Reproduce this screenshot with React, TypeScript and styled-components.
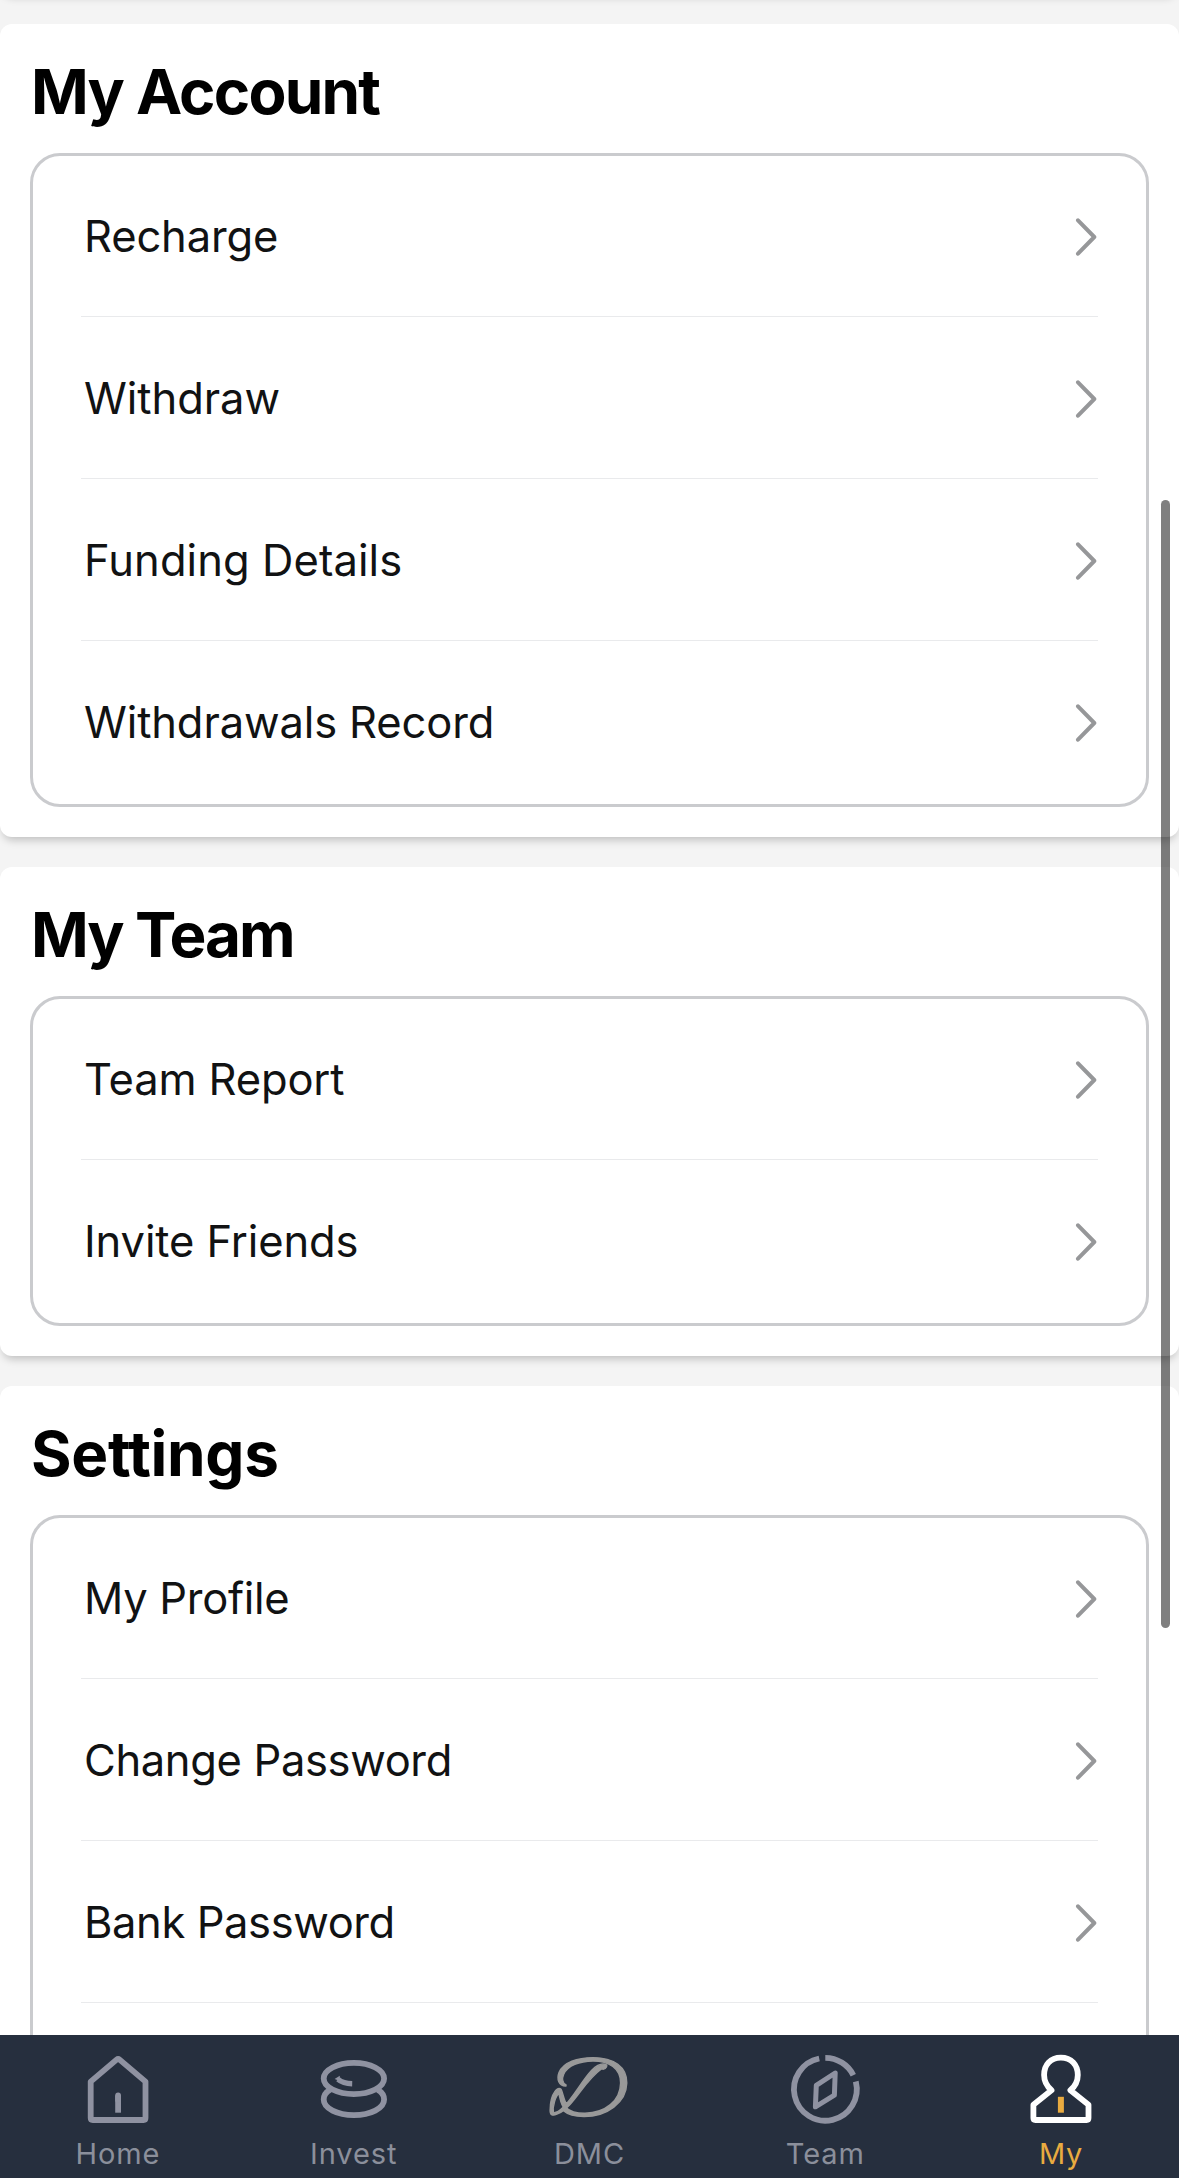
import React from 'react';
import styled, { createGlobalStyle } from 'styled-components';

const GlobalStyle = createGlobalStyle`
  *, *::before, *::after { box-sizing: border-box; }
  html, body { margin: 0; padding: 0; }
  body {
    background: #f4f4f4;
    font-family: Inter, Roboto, "Liberation Sans", sans-serif;
    overflow: hidden;
  }
`;

const Screen = styled.div`
  position: relative;
  display: flex;
  flex-direction: column;
  width: 1179px;
  height: 2178px;
  overflow: hidden;
  background: #f4f4f4;
`;

const Scroller = styled.main`
  flex: 1;
  min-height: 0;
  overflow: hidden;
  display: flex;
  flex-direction: column;
  gap: 30px;
`;

const Card = styled.section`
  flex: none;
  padding: 0 30px 30px;
  border-radius: 12px;
  background: #fff;
  box-shadow: 0 6px 9px -3px rgba(0, 0, 0, 0.22);
`;

const PreviousCard = styled(Card)`
  height: 60px;
  margin-top: -66px;
  padding: 0;
`;

const Title = styled.h2<{ $spacing: number }>`
  margin: 0;
  height: 129px;
  padding: 30px 0 0 1px;
  font-size: 62px;
  line-height: 75px;
  font-weight: 700;
  letter-spacing: ${(p) => p.$spacing}px;
  color: #000;
`;

const List = styled.ul`
  margin: 0;
  padding: 0 48px;
  list-style: none;
  border: 3px solid #cacbce;
  border-radius: 30px;
`;

const Row = styled.li`
  display: flex;
  align-items: center;
  justify-content: space-between;
  height: 161px;
  margin-bottom: 1px;
  padding: 0 1px 0 3px;
  border-bottom: 1px solid #e9eaec;
  &:last-child { border-bottom-color: transparent; }
`;

const Label = styled.span<{ $spacing: number }>`
  padding-bottom: 1px;
  font-size: 43.5px;
  line-height: 60px;
  letter-spacing: ${(p) => p.$spacing}px;
  white-space: nowrap;
  color: #111213;
`;

const TabBar = styled.nav`
  flex: none;
  display: grid;
  grid-template-columns: repeat(5, 1fr);
  height: 143px;
  background: #262f3e;
`;

const Tab = styled.div<{ $active?: boolean }>`
  display: flex;
  flex-direction: column;
  align-items: center;
  padding-top: 15px;
  color: ${(p) => (p.$active ? '#e9ab40' : '#8b8f9b')};
`;

const TabLabel = styled.span`
  margin-top: 9px;
  font-size: 29px;
  line-height: 38px;
  letter-spacing: 0.9px;
`;

const Icon = styled.svg`
  display: block;
  flex: none;
  fill: none;
  stroke: #8f92a1;
  stroke-width: 5.8;
  stroke-linejoin: round;
`;

const ChevronIcon = styled(Icon)`
  margin-top: 2px;
  stroke: #969799;
  stroke-width: 4;
  stroke-linecap: round;
`;

const ScrollThumb = styled.div`
  position: absolute;
  top: 500px;
  right: 9px;
  width: 9px;
  height: 1128px;
  border-radius: 5px;
  background: rgba(0, 0, 0, 0.5);
`;

const Chevron = () => (
  <ChevronIcon width="24" height="42" viewBox="0 0 24 42">
    <path d="M5 4.3 21.3 21 5 37.7" />
  </ChevronIcon>
);

const TabIcon = ({ children }: { children: React.ReactNode }) => (
  <Icon width="80" height="76" viewBox="0 0 80 76">{children}</Icon>
);

const HomeIcon = () => (
  <TabIcon>
    <path d="M12.7 31.6 38.6 9.6Q40.1 8.3 41.6 9.6L67.5 31.6V68Q67.5 70 65.5 70H14.7Q12.7 70 12.7 68Z" />
    <path d="M40.1 45.5V62.7" />
    <path d="M40.1 45.5V50" strokeLinecap="round" />
  </TabIcon>
);

const InvestIcon = () => (
  <TabIcon>
    <ellipse cx="39.9" cy="28.5" rx="30.2" ry="15.6" />
    <path d="M16.2 39.8C11.6 42.3 9.7 45.6 9.7 49.6C9.7 58.4 23.2 65.2 39.9 65.2S70.1 58.4 70.1 49.6C70.1 45.6 68.2 42.3 63.6 39.8" />
    <path d="M24 29.2Q29 33.6 38.2 33.8" strokeWidth="5.4" />
    <path d="M20.6 29 25.8 25.8V31Z" fill="#8f92a1" stroke="none" />
  </TabIcon>
);

const DmcIcon = () => (
  <TabIcon>
    <g fill="#999" stroke="#999" strokeWidth="1.4">
      <path d="M17 36C9.5 36.2 7.6 29 10 22.5C14.5 12.3 28.5 7.6 44 7.6C65 7.6 78 17 77.8 33C77.4 52.6 58 66.6 35 66.6C26 66.6 19.5 65.3 14.5 60.8L16.5 57.2C21.5 61.8 28.5 63.4 36 63.3C56.5 62.6 71.3 51 71.6 33C71.7 18.2 60 11 44 11C30.5 11.2 18.8 15.6 14.7 24.2C12.8 28.7 13.5 33 17 34.8Z" />
      <path d="M57.8 15.2C53.7 12.5 47.5 15.6 42.7 20.2C32.5 31 24.5 47.5 13.6 57.8C9.9 61.5 7 63 4.4 62.6C3.3 56 6.8 46 9.7 43.8C11.2 47.3 11.2 53.5 15.5 59L18.7 55.7C14.6 51.2 14.4 43.5 12 39.2C10.3 37.5 8 38.5 6.1 41.2C1.8 47 1.1 54 1.1 60.5C1.1 65.6 3.9 66 7.9 64.2C14 62 20 56.3 25 49.8C34 38.6 41.3 27 52.7 18.8C55 20 58.2 18 57.8 15.2Z" />
    </g>
  </TabIcon>
);

const TeamIcon = () => (
  <TabIcon>
    <path d="M40.3 7.9A31.4 31.4 0 0 1 68.3 25.2M70.8 31.5A31.4 31.4 0 1 1 34.2 8.5" />
    <path d="M50.2 23 31.3 35.4 30.4 56.8 49.4 45.2Z" strokeWidth="5" />
  </TabIcon>
);

const MyIcon = () => (
  <TabIcon>
    <path
      d="M30.5 40.3C25.8 36.2 23.1 30.5 23.1 25C23.1 14.6 29.5 7.7 39.9 7.7S56.8 14.6 56.8 25C56.8 30.5 54.2 36.2 49.4 40.3L67.5 54.7V68Q67.5 70 65.5 70H14.4Q12.4 70 12.4 68V54.7Z"
      stroke="#fff"
    />
    <path d="M39.9 46.8V62.7" stroke="#e9ab40" strokeWidth="6" />
  </TabIcon>
);

type Item = { label: string; spacing: number };

const sections: { title: string; spacing: number; items: Item[] }[] = [
  {
    title: 'My Account',
    spacing: -1.8,
    items: [
      { label: 'Recharge', spacing: -0.15 },
      { label: 'Withdraw', spacing: -0.05 },
      { label: 'Funding Details', spacing: 0.08 },
      { label: 'Withdrawals Record', spacing: -0.12 },
    ],
  },
  {
    title: 'My Team',
    spacing: -2.1,
    items: [
      { label: 'Team Report', spacing: -0.15 },
      { label: 'Invite Friends', spacing: -0.1 },
    ],
  },
  {
    title: 'Settings',
    spacing: -0.3,
    items: [
      { label: 'My Profile', spacing: -0.3 },
      { label: 'Change Password', spacing: -0.35 },
      { label: 'Bank Password', spacing: -0.4 },
      { label: '', spacing: 0 },
    ],
  },
];

const tabs = [
  { label: 'Home', icon: <HomeIcon /> },
  { label: 'Invest', icon: <InvestIcon /> },
  { label: 'DMC', icon: <DmcIcon /> },
  { label: 'Team', icon: <TeamIcon /> },
  { label: 'My', icon: <MyIcon />, active: true },
];

export default function App() {
  return (
    <>
      <GlobalStyle />
      <Screen>
        <Scroller>
          <PreviousCard />
          {sections.map((section) => (
            <Card key={section.title}>
              <Title $spacing={section.spacing}>{section.title}</Title>
              <List>
                {section.items.map((item) => (
                  <Row key={item.label}>
                    <Label $spacing={item.spacing}>{item.label}</Label>
                    <Chevron />
                  </Row>
                ))}
              </List>
            </Card>
          ))}
        </Scroller>
        <TabBar>
          {tabs.map((tab) => (
            <Tab key={tab.label} $active={tab.active}>
              {tab.icon}
              <TabLabel>{tab.label}</TabLabel>
            </Tab>
          ))}
        </TabBar>
        <ScrollThumb />
      </Screen>
    </>
  );
}
